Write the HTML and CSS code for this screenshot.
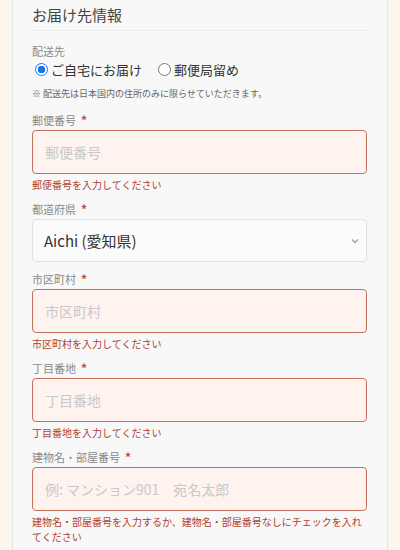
FILE: index.html
```html
<!DOCTYPE html>
<html lang="ja">
<head>
<meta charset="utf-8">
<link rel="stylesheet" href="styles.css">
</head>
<body>
<div class="card">
  <h2 class="title">お届け先情報</h2>
  <div class="rule"></div>
  <div class="label">配送先</div>
  <div class="radios">
    <span class="radio"><span class="dot on"></span>ご自宅にお届け</span>
    <span class="radio"><span class="dot"></span>郵便局留め</span>
  </div>
  <div class="note">※ 配送先は日本国内の住所のみに限らせていただきます。</div>

  <div class="field">
    <div class="label">郵便番号<span class="req">*</span></div>
    <div class="input err"><span class="ph">郵便番号</span></div>
    <div class="error">郵便番号を入力してください</div>
  </div>

  <div class="field">
    <div class="label">都道府県<span class="req">*</span></div>
    <div class="input select"><span class="val">Aichi (愛知県)</span>
      <svg class="chev" width="8" height="6" viewBox="0 0 8 6"><polyline points="1,1.5 4,4.5 7,1.5" fill="none" stroke="#a0a0a0" stroke-width="1.3"/></svg>
    </div>
  </div>

  <div class="field">
    <div class="label">市区町村<span class="req">*</span></div>
    <div class="input err"><span class="ph">市区町村</span></div>
    <div class="error">市区町村を入力してください</div>
  </div>

  <div class="field">
    <div class="label">丁目番地<span class="req">*</span></div>
    <div class="input err"><span class="ph">丁目番地</span></div>
    <div class="error">丁目番地を入力してください</div>
  </div>

  <div class="field">
    <div class="label">建物名・部屋番号<span class="req">*</span></div>
    <div class="input err"><span class="ph">例: マンション901　宛名太郎</span></div>
    <div class="error">建物名・部屋番号を入力するか、建物名・部屋番号なしにチェックを入れてください</div>
  </div>
</div>
</body>
</html>
```
FILE: styles.css
```css
html, body {
  margin: 0;
  padding: 0;
  background: #fdf6ec;
}
body {
  font-family: "Noto Sans CJK JP", "Noto Sans", sans-serif;
  padding: 0 12px;
}
.card {
  background: #f8f8f8;
  border-left: 1px solid #e6e6e6;
  border-right: 1px solid #e6e6e6;
  padding: 5px 20px 20px 19px;
  min-height: 560px;
}
.title {
  margin: 0;
  font-size: 15px;
  font-weight: 400;
  line-height: 20px;
  height: 20px;
  color: #444;
}
.rule {
  height: 1px;
  background: #ececec;
  margin: 5px 0 12px;
}
.label {
  display: flex;
  align-items: center;
  gap: 5px;
  height: 16px;
  font-size: 11px;
  line-height: 16px;
  color: #8a8a8a;
}
.req {
  color: #c24a36;
  font-size: 12px;
  font-weight: 700;
  line-height: 16px;
}
.radios {
  display: flex;
  gap: 16px;
  height: 20px;
  align-items: center;
  padding-left: 3px;
  font-size: 13px;
  color: #333;
}
.radio {
  display: flex;
  align-items: center;
  gap: 3px;
}
.dot {
  width: 11px;
  height: 11px;
  border-radius: 50%;
  border: 1px solid #777;
  background: #fff;
}
.dot.on {
  border-color: #1a73e8;
  background: radial-gradient(circle, #1a73e8 0 3.5px, #fff 4px);
}
.note {
  font-size: 9px;
  line-height: 12px;
  height: 12px;
  color: #666;
  margin: 9px 0 12px;
  white-space: nowrap;
}
.field {
  margin-bottom: 9px;
}
.field .label {
  margin-bottom: 2px;
}
.input {
  height: 44px;
  box-sizing: border-box;
  border-radius: 4px;
  display: flex;
  align-items: center;
  padding-left: 12px;
  font-size: 14px;
}
.input.err {
  border: 1px solid #c5705c;
  background: #fff3ef;
}
.ph {
  color: #c9c9c9;
}
.input.select {
  border: 1px solid #e2e2e2;
  background: #fbfbfb;
  justify-content: space-between;
  padding-left: 11px;
  padding-right: 7px;
  height: 43px;
}
.val {
  font-size: 15px;
  color: #333;
}
.error {
  margin-top: 3px;
  font-size: 10px;
  line-height: 15px;
  color: #b0402c;
}
```
